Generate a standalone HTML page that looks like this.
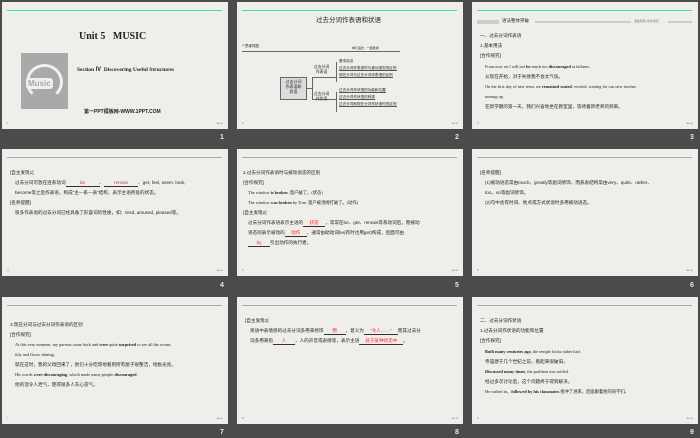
<!DOCTYPE html>
<html><head><meta charset="utf-8"><style>
*{margin:0;padding:0;box-sizing:border-box}
body{width:700px;height:438px;background:#4b4b4b;position:relative;overflow:hidden;font-family:"Liberation Serif","Noto Sans CJK SC",serif;color:#222}
.s{position:absolute;width:226px;height:127px;background:#f0eeea;overflow:hidden}
.g{position:absolute;left:5px;right:6px;top:8px;height:1px;background:#6fc99a}
.t{position:absolute;white-space:nowrap;font-size:4.6px;line-height:1}
.cn{font-family:"Liberation Sans","Noto Sans CJK SC",sans-serif}
.pg{position:absolute;left:5px;bottom:4px;font-size:3px;color:#666}
.nav{position:absolute;right:5px;bottom:4px;font-size:3px;color:#888}
.n{position:absolute;color:#e8e8e8;font:bold 7px "Liberation Sans",sans-serif}
.r{color:#e03030}
.u{display:inline-block;border-bottom:0.5px solid #333;text-align:center}
b{font-weight:bold}
.ln{position:absolute;height:0.5px;background:#666}
.bx{position:absolute;border:0.5px solid #666;font-size:4px;text-align:center;line-height:1.2}
</style></head><body>

<div class="s" style="left:2px;top:2px">
 <div class="g"></div>
 <div class="t" style="left:77px;top:30px;font-size:10px;font-weight:bold;color:#222">Unit 5&nbsp;&nbsp;&nbsp;MUSIC</div>
 <div style="position:absolute;left:19px;top:51px;width:47px;height:56px;background:#a9a9a9"></div>
 <div style="position:absolute;left:24px;top:62px;width:37px;height:36px;border:3px solid #f0f0f0;border-bottom-color:transparent;border-radius:50%"></div>
 <div class="t" style="left:24px;top:76px;font:bold 8px 'Liberation Sans',sans-serif;color:#a9a9a9;background:#f0f0f0;padding:1px 2px;border-radius:3px">Music</div>
 <div class="t" style="left:75px;top:66px;font-size:5.5px;font-weight:bold;color:#222">Section Ⅳ&nbsp; Discovering Useful Structures</div>
 <div class="t cn" style="left:82px;top:108px;font-size:5px;font-weight:bold;color:#222">第一PPT模板网-WWW.1PPT.COM</div>
 <div class="pg">1</div><div class="nav">◂ ▸ ▸|</div>
</div>

<div class="s" style="left:237px;top:2px">
 <div class="g"></div>
 <div class="t cn" style="left:79px;top:16px;font-size:6.5px;color:#222">过去分词作表语和状语</div>
 <div class="t cn" style="left:5px;top:43px;font-size:3.5px">❝ 思维导图</div>
 <div class="t cn" style="left:115px;top:45px;font-size:3px">单元语法 · 一图贯通</div>
 <div class="ln" style="left:5px;width:158px;top:49px"></div>
 <div class="bx cn" style="left:43px;top:75px;width:27px;height:23px;padding-top:2px;background:#ddd">过去分词<br>作表语和<br>状语</div>
 <div class="ln" style="left:70px;width:5px;top:86px"></div>
 <div class="ln" style="left:75px;width:0.5px;height:22px;top:75px"></div>
 <div class="ln" style="left:75px;width:24px;top:75px"></div>
 <div class="ln" style="left:75px;width:24px;top:97px"></div>
 <div class="t cn" style="left:77px;top:63px;font-size:3.8px;line-height:1.3;text-align:center">过去分词<br>作表语</div>
 <div class="t cn" style="left:77px;top:90px;font-size:3.8px;line-height:1.3;text-align:center">过去分词<br>作状语</div>
 <div class="ln" style="left:99px;width:0.5px;height:20px;top:60px"></div>
 <div class="ln" style="left:99px;width:0.5px;height:20px;top:90px"></div>
 <div class="t" style="left:102px;top:56px;font-size:3.6px;line-height:1.95">基本用法<br><span style="border-bottom:.5px solid #555">过去分词作表语时与被动语态的区别</span><br><span style="border-bottom:.5px solid #555">现在分词与过去分词作表语的区别</span></div>
 <div class="t" style="left:102px;top:85px;font-size:3.6px;line-height:1.95"><span style="border-bottom:.5px solid #555">过去分词作状语的功能和位置</span><br><span style="border-bottom:.5px solid #555">过去分词作状语的种类</span><br><span style="border-bottom:.5px solid #555">过去分词和现在分词作状语时的区别</span></div>
 <div class="pg">2</div><div class="nav">◂ ▸ ▸|</div>
</div>

<div class="s" style="left:472px;top:2px">
 <div class="g"></div>
 <div style="position:absolute;left:5px;top:18px;width:22px;height:4px;background:#ccc"></div>
 <div class="t cn" style="left:30px;top:17px;font-size:4.5px">语法整体突破</div>
 <div style="position:absolute;left:63px;top:19px;width:96px;height:2px;background:#ccc"></div>
 <div class="t cn" style="left:162px;top:18px;font-size:3px;color:#777">温故知新 合作探究</div>
 <div style="position:absolute;left:196px;top:19px;width:24px;height:2px;background:#ccc"></div>
 <div class="t cn" style="left:8px;top:32px">一、过去分词作表语</div>
 <div class="t cn" style="left:8px;top:42px">1.基本用法</div>
 <div class="t cn" style="left:8px;top:52px">[合作探究]</div>
 <div class="t" style="left:13px;top:63px;font-size:4.3px">From now on I will not <b>be</b> much too <b>discouraged</b> at failures.</div>
 <div class="t cn" style="left:13px;top:73px">从现在开始，对于失败我不会太气馁。</div>
 <div class="t" style="left:13px;top:83px;font-size:4.3px">On the first day of new term, we <b>remained seated</b>, excited, waiting for our new teacher</div>
 <div class="t" style="left:13px;top:93px;font-size:4.3px">turning up.</div>
 <div class="t cn" style="left:13px;top:103px">在新学期的第一天，我们兴奋地坐在教室里，等待着新老师的到来。</div>
 <div class="pg">3</div><div class="nav">◂ ▸ ▸|</div>
</div>

<div class="s" style="left:2px;top:149px">
 <div class="g"></div>
 <div class="t cn" style="left:8px;top:22px">[自主发现1]</div>
 <div class="t cn" style="left:13px;top:32px">过去分词可放在连系动词<span class="u" style="width:34px"><span class="r">be</span></span>、<span class="u" style="width:34px"><span class="r">remain</span></span>、get, feel, seem, look,</div>
 <div class="t cn" style="left:13px;top:42px">become等之后作表语，构成“主—系—表”结构，表示主语所处的状态。</div>
 <div class="t cn" style="left:8px;top:52px">[名师提醒]</div>
 <div class="t cn" style="left:13px;top:62px">很多作表语的过去分词已经具备了形容词的性质，如：tired, amused, pleased等。</div>
 <div class="pg">4</div><div class="nav">◂ ▸ ▸|</div>
</div>

<div class="s" style="left:237px;top:149px">
 <div class="g"></div>
 <div class="t cn" style="left:6px;top:22px">2.过去分词作表语时与被动语态的区别</div>
 <div class="t cn" style="left:6px;top:32px">[合作探究]</div>
 <div class="t" style="left:11px;top:42px;font-size:4.3px">The window <b>is broken</b>. 窗户破了。(状态)</div>
 <div class="t" style="left:11px;top:52px;font-size:4.3px">The window <b>was broken</b> by Tom. 窗户被汤姆打破了。(动作)</div>
 <div class="t cn" style="left:6px;top:62px">[自主发现2]</div>
 <div class="t cn" style="left:11px;top:72px">过去分词作表语表示主语的<span class="u" style="width:22px"><span class="r">状态</span></span>，常常在be、get、remain等系动词后，而被动</div>
 <div class="t cn" style="left:11px;top:82px">语态则表示被动的<span class="u" style="width:22px"><span class="r">动作</span></span>，通常由助动词be(有时也用get)构成，后面可由</div>
 <div class="t cn" style="left:11px;top:92px"><span class="u" style="width:22px"><span class="r">by</span></span>引出动作的执行者。</div>
 <div class="pg">5</div><div class="nav">◂ ▸ ▸|</div>
</div>

<div class="s" style="left:472px;top:149px">
 <div class="g"></div>
 <div class="t cn" style="left:8px;top:22px">[名师提醒]</div>
 <div class="t cn" style="left:13px;top:32px">(1)被动语态常由much、greatly等副词修饰，而系表结构常由very、quite、rather、</div>
 <div class="t cn" style="left:13px;top:42px">too、so等副词修饰。</div>
 <div class="t cn" style="left:13px;top:52px">(2)句中含有时间、地点或方式状语时多用被动语态。</div>
 <div class="pg">6</div><div class="nav">◂ ▸ ▸|</div>
</div>

<div class="s" style="left:2px;top:297px">
 <div class="g"></div>
 <div class="t cn" style="left:8px;top:26px">3.现在分词与过去分词作表语的区别</div>
 <div class="t cn" style="left:8px;top:36px">[合作探究]</div>
 <div class="t" style="left:13px;top:46px;font-size:4.3px">At this very moment, my parents came back and <b>were</b> quite <b>surprised</b> to see all the rooms</div>
 <div class="t" style="left:13px;top:56px;font-size:4.3px">tidy and floors shining.</div>
 <div class="t cn" style="left:13px;top:66px">就在这时，我的父母回来了，他们十分吃惊地看到所有屋子很整洁，地板光亮。</div>
 <div class="t" style="left:13px;top:76px;font-size:4.3px">His words <b>were discouraging</b>, which made many people <b>discouraged</b>.</div>
 <div class="t cn" style="left:13px;top:86px">他的话令人泄气，使得很多人灰心丧气。</div>
 <div class="pg">7</div><div class="nav">◂ ▸ ▸|</div>
</div>

<div class="s" style="left:237px;top:297px">
 <div class="g"></div>
 <div class="t cn" style="left:8px;top:22px">[自主发现3]</div>
 <div class="t cn" style="left:13px;top:32px">英语中表情感的过去分词多用来修饰<span class="u" style="width:22px"><span class="r">物</span></span>，意义为<span class="u" style="width:34px"><span class="r">“令人……”</span></span>而其过去分</div>
 <div class="t cn" style="left:13px;top:42px">词多用来指<span class="u" style="width:22px"><span class="r">人</span></span>，人的声音或表情等，表示主语<span class="u" style="width:44px"><span class="r">处于某种状态中</span></span>。</div>
 <div class="pg">8</div><div class="nav">◂ ▸ ▸|</div>
</div>

<div class="s" style="left:472px;top:297px">
 <div class="g"></div>
 <div class="t cn" style="left:8px;top:22px">二、过去分词作状语</div>
 <div class="t cn" style="left:8px;top:32px">1.过去分词作状语的功能和位置</div>
 <div class="t cn" style="left:8px;top:42px">[合作探究]</div>
 <div class="t" style="left:13px;top:53px;font-size:4.3px"><b>Built many centuries ago</b>, the temple looks rather bad.</div>
 <div class="t cn" style="left:13px;top:63px">寺庙建于几个世纪之前，看起来很破旧。</div>
 <div class="t" style="left:13px;top:73px;font-size:4.3px"><b>Discussed many times</b>, the problem was settled.</div>
 <div class="t cn" style="left:13px;top:83px">经过多次讨论后，这个问题终于得到解决。</div>
 <div class="t" style="left:13px;top:93px;font-size:4.3px">He rushed in，<b>followed by his classmates</b>.<span class="cn">他冲了进来，后面跟着他的同学们。</span></div>
 <div class="pg">9</div><div class="nav">◂ ▸ ▸|</div>
</div>

<div class="n" style="left:220px;top:134px">1</div>
<div class="n" style="left:455px;top:134px">2</div>
<div class="n" style="left:690px;top:134px">3</div>
<div class="n" style="left:220px;top:282px">4</div>
<div class="n" style="left:455px;top:282px">5</div>
<div class="n" style="left:690px;top:282px">6</div>
<div class="n" style="left:220px;top:429px">7</div>
<div class="n" style="left:455px;top:429px">8</div>
<div class="n" style="left:690px;top:429px">9</div>
</body></html>
